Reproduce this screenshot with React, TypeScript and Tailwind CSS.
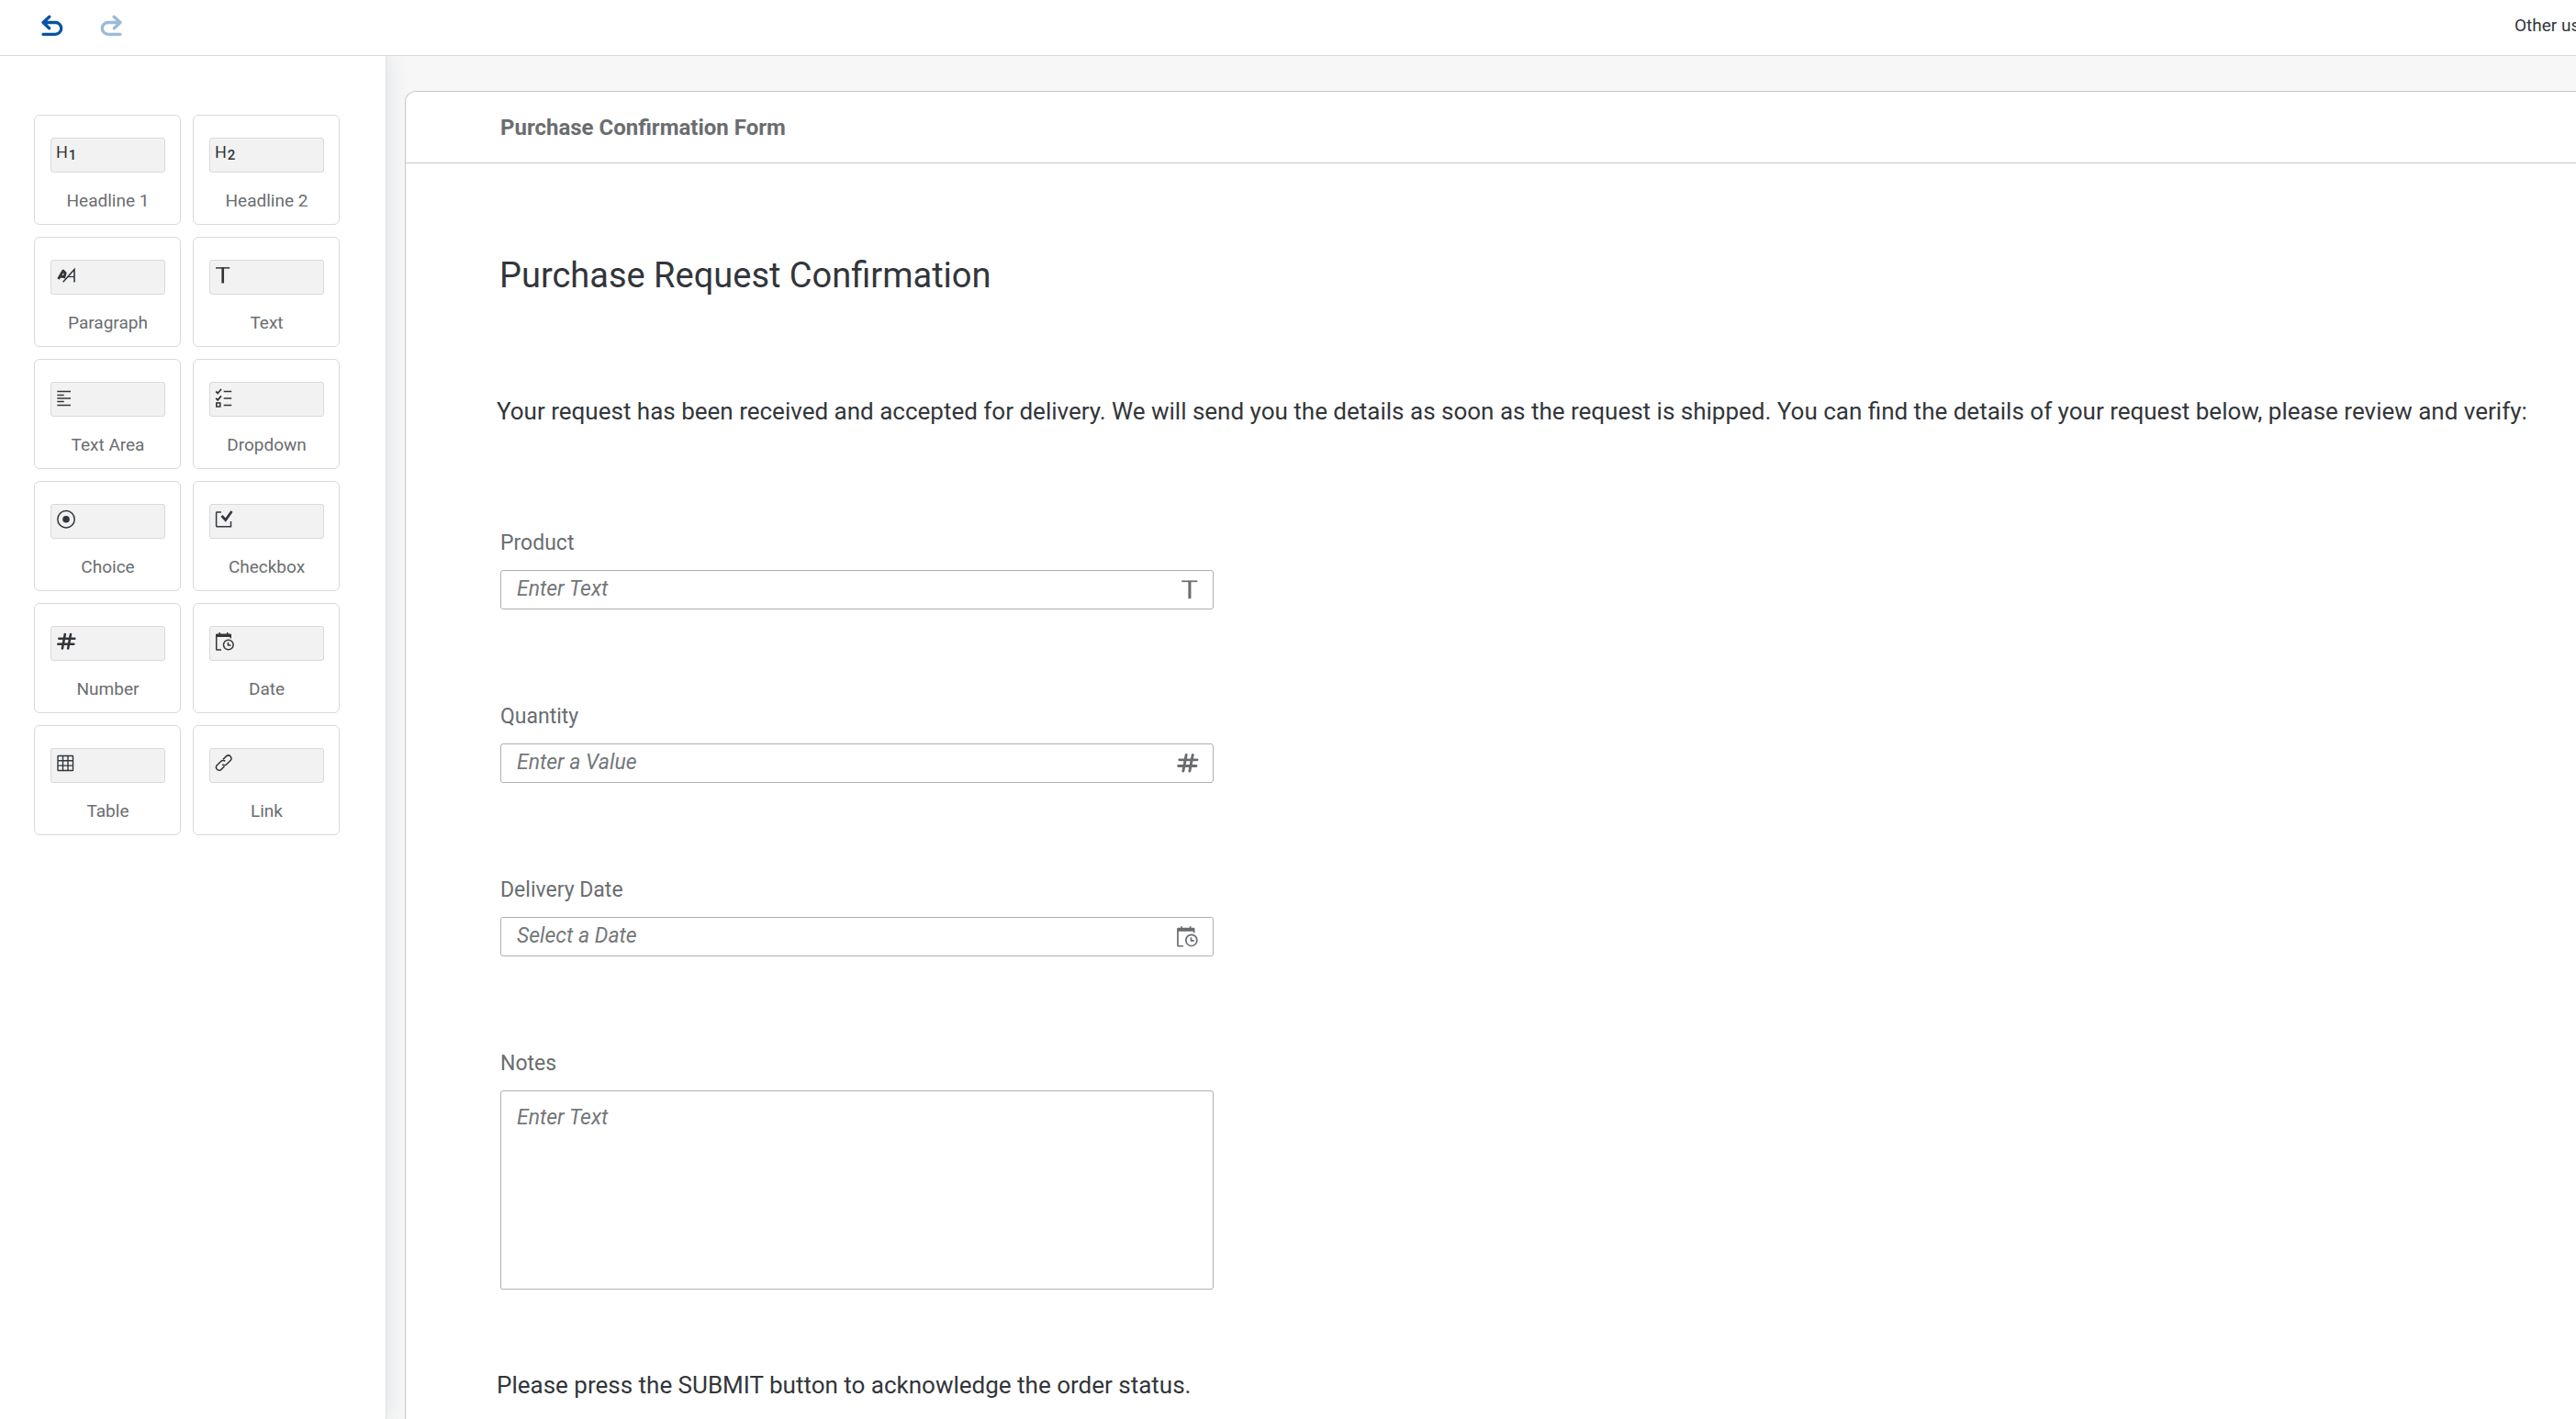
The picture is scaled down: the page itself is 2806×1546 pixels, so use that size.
import type { ReactNode } from "react";

const H = ({ level }: { level: number }) => (
  <span className="flex items-baseline text-lg leading-5">
    H<span className="relative top-0.5 pl-px text-[15px] leading-5 font-medium">{level}</span>
  </span>
);

const Svg = ({ children, box = "0 0 22 22", large = false }: { children: ReactNode; box?: string; large?: boolean }) => (
  <svg
    viewBox={box}
    className={large ? "h-[25px] w-auto shrink-0" : "h-[22px] w-auto shrink-0"}
    fill="none"
    stroke="currentColor"
    strokeWidth="1.4"
    aria-hidden="true"
  >
    {children}
  </svg>
);

const ParagraphIcon = () => (
  <Svg>
    <path d="M2.500 15 7.800 6 10.200 8.500 8.500 14M5 12.300 9.500 12.500" strokeWidth="2.800" strokeLinejoin="round" />
    <path d="M7.700 18.300 20 4.500V18.500" strokeWidth="1.600" />
    <path d="M13 12.500H20" strokeWidth="1.300" />
  </Svg>
);

const TextIcon = ({ large }: { large?: boolean }) => (
  <Svg box="0 0 18 22" large={large}>
    <path d="M1 2.900H16.200" strokeWidth="1.500" />
    <path d="M8.700 2.500V19.500" strokeWidth="2.700" />
  </Svg>
);

const TextAreaIcon = () => (
  <Svg>
    <path d="M1.300 4.500H16M1.300 8.500H8.700M1.300 12H16M1.300 15.500H8.700M1.300 19.500H16" strokeWidth="1.400" />
  </Svg>
);

const DropdownIcon = () => (
  <Svg>
    <path d="M1.200 4.500 3.200 6.500 7 2M1.200 11.800 3.200 13.800 7 9.300" strokeWidth="1.800" />
    <path d="M9.700 4.500H18.300M9.700 12H18.300M9.700 19.500H18.300" strokeWidth="1.400" />
    <path d="M1.800 17H5.800V21H1.800Z" strokeWidth="1.600" />
  </Svg>
);

const ChoiceIcon = () => (
  <Svg>
    <circle cx="11" cy="10.700" r="9.200" strokeWidth="1.500" />
    <circle cx="11" cy="10.700" r="3.800" fill="currentColor" stroke="none" />
  </Svg>
);

const CheckboxIcon = () => (
  <Svg>
    <path d="M7 3H2.200Q1.600 3 1.600 3.600V18.100Q1.600 18.700 2.200 18.700H17.500V13" strokeWidth="1.500" />
    <path d="M7.500 7 11.700 11.500 18.500 2" strokeWidth="2.700" />
  </Svg>
);

const NumberIcon = ({ large }: { large?: boolean }) => (
  <Svg large={large}>
    <path
      d="M9.800 3 6.900 18.500M16 3 13.100 18.500M3.300 7.800H20.300M2.300 13.700H19.300"
      strokeWidth="2.600"
      strokeLinecap="round"
    />
  </Svg>
);

const DateIcon = ({ large }: { large?: boolean }) => (
  <Svg large={large}>
    <path d="M1.700 4V19.400Q1.700 20 2.300 20H7" strokeWidth="1.500" />
    <path
      d="M1 3.500Q1 2.500 2 2.500H4.500V1H6V2.500H13V1H14.500V2.500H17Q18 2.500 18 3.500V7.500H16.600V6H1Z"
      fill="currentColor"
      stroke="none"
    />
    <circle cx="14.800" cy="14.500" r="5.300" strokeWidth="1.500" />
    <path d="M14.500 11.700V14.900H17.500" strokeWidth="1.500" />
  </Svg>
);

const TableIcon = () => (
  <Svg>
    <rect x="2" y="2.500" width="16.500" height="16" rx="0.500" />
    <path d="M7.500 2.500V18.500M13 2.500V18.500M2 7.700H18.500M2 13.100H18.500" />
  </Svg>
);

const LinkIcon = () => (
  <Svg>
    <path
      d="M9 6.200 12.700 2.600A3.300 3.300 0 0 1 17.300 7.200L12.800 11.800A3.300 3.300 0 0 1 8.100 11.800M10.400 14 6.700 17.600A3.300 3.300 0 0 1 2.100 13L6.600 8.400A3.300 3.300 0 0 1 11.300 8.400"
      strokeWidth="1.500"
    />
  </Svg>
);

const UndoIcon = ({ className = "" }: { className?: string }) => (
  <svg
    viewBox="0 0 24 24"
    className={`h-6 w-6 ${className}`}
    fill="none"
    stroke="currentColor"
    strokeWidth="3.300"
    strokeLinecap="round"
    strokeLinejoin="round"
    aria-hidden="true"
  >
    <path d="M8.800 2.200 2 8.500 8.600 14.800M2 8.500H15.300A6.400 6.400 0 0 1 15.300 21.300H2" />
  </svg>
);

const tiles: { label: string; icon: ReactNode }[] = [
  { label: "Headline 1", icon: <H level={1} /> },
  { label: "Headline 2", icon: <H level={2} /> },
  { label: "Paragraph", icon: <ParagraphIcon /> },
  { label: "Text", icon: <TextIcon /> },
  { label: "Text Area", icon: <TextAreaIcon /> },
  { label: "Dropdown", icon: <DropdownIcon /> },
  { label: "Choice", icon: <ChoiceIcon /> },
  { label: "Checkbox", icon: <CheckboxIcon /> },
  { label: "Number", icon: <NumberIcon /> },
  { label: "Date", icon: <DateIcon /> },
  { label: "Table", icon: <TableIcon /> },
  { label: "Link", icon: <LinkIcon /> },
];

const fields = [
  { id: "product", label: "Product", placeholder: "Enter Text", icon: <TextIcon large /> },
  { id: "quantity", label: "Quantity", placeholder: "Enter a Value", icon: <NumberIcon large /> },
  { id: "delivery-date", label: "Delivery Date", placeholder: "Select a Date", icon: <DateIcon large /> },
];

function Tile({ label, icon }: { label: string; icon: ReactNode }) {
  return (
    <button type="button" className="flex flex-col rounded-md border border-[#d9d9d9] bg-white pt-6 pr-4 pb-[13px] pl-[17px]">
      <span className="flex h-[38px] w-full items-start rounded-[3px] border border-[#d9d9d9] bg-[#f2f2f2] p-[5px] text-[#32363a]">
        {icon}
      </span>
      <span className="mt-[19px] w-full text-center text-[19px] leading-6 text-[#6a6d70]">{label}</span>
    </button>
  );
}

export default function App() {
  return (
    <div className="flex h-screen flex-col overflow-hidden bg-white font-['Roboto','Liberation_Sans',sans-serif] text-[#32363a]">
      <header className="flex h-[61px] shrink-0 items-center justify-between border-b border-[#d9d9d9] pb-1 pl-[45px]">
        <div className="flex gap-10">
          <button type="button" aria-label="Undo" className="text-[#0854a0]">
            <UndoIcon />
          </button>
          <button type="button" aria-label="Redo" disabled className="text-[#0854a0] opacity-40">
            <UndoIcon className="-scale-x-100" />
          </button>
        </div>
        <div className="w-[67px] overflow-hidden text-[19px] leading-6 whitespace-nowrap">Other us</div>
      </header>

      <div className="flex min-h-0 flex-1">
        <aside className="z-10 w-[421px] shrink-0 border-r border-[#e0e1e2] bg-white pt-16 pr-[50px] pl-[37px] shadow-[0_0_24px_0_rgba(80,100,120,0.16)] [clip-path:inset(0_-30px_0_0)]">
          <div className="grid grid-cols-2 gap-[13px]">
            {tiles.map((tile) => (
              <Tile key={tile.label} {...tile} />
            ))}
          </div>
        </aside>

        <main className="flex min-w-0 flex-1 flex-col bg-[#f7f7f7] pt-[38px] pl-5">
          <section className="flex-1 rounded-tl-xl border-t border-l border-[#c8c8c8] bg-white">
            <div className="flex h-[78px] items-center border-b border-[#c8c8c8] pl-[103px]">
              <h1 className="text-2xl leading-7 font-bold text-[#6a6d70]">Purchase Confirmation Form</h1>
            </div>
            <form className="pt-[98px] pl-[99px]">
              <h2 className="pl-[3px] text-[38px] leading-[48px]">Purchase Request Confirmation</h2>
              <p className="mt-[108px] text-[26px] leading-8">
                Your request has been received and accepted for delivery. We will send you the details as soon as the
                request is shipped. You can find the details of your request below, please review and verify:
              </p>
              <div className="mt-[114px] flex w-[781px] flex-col gap-[103px] pl-1">
                {fields.map((f) => (
                  <div key={f.id} className="flex flex-col gap-[15px]">
                    <label htmlFor={f.id} className="text-[23px] leading-7 text-[#6a6d70]">
                      {f.label}
                    </label>
                    <div className="flex h-[43px] items-center rounded-[3px] border border-[#aeb0b2] pr-[15px] pb-px pl-[17px] text-[#6a6d70]">
                      <input
                        id={f.id}
                        placeholder={f.placeholder}
                        className="min-w-0 flex-1 text-[23px] leading-7 outline-none placeholder:text-[#74777a] placeholder:italic"
                      />
                      {f.icon}
                    </div>
                  </div>
                ))}
                <div className="flex flex-col gap-[15px]">
                  <label htmlFor="notes" className="text-[23px] leading-7 text-[#6a6d70]">
                    Notes
                  </label>
                  <textarea
                    id="notes"
                    placeholder="Enter Text"
                    className="h-[217px] resize-none rounded-[3px] border border-[#aeb0b2] px-[17px] py-[15px] text-[23px] leading-7 outline-none placeholder:text-[#74777a] placeholder:italic"
                  />
                </div>
              </div>
              <p className="mt-[88px] text-[26px] leading-8">
                Please press the SUBMIT button to acknowledge the order status.
              </p>
            </form>
          </section>
        </main>
      </div>
    </div>
  );
}
